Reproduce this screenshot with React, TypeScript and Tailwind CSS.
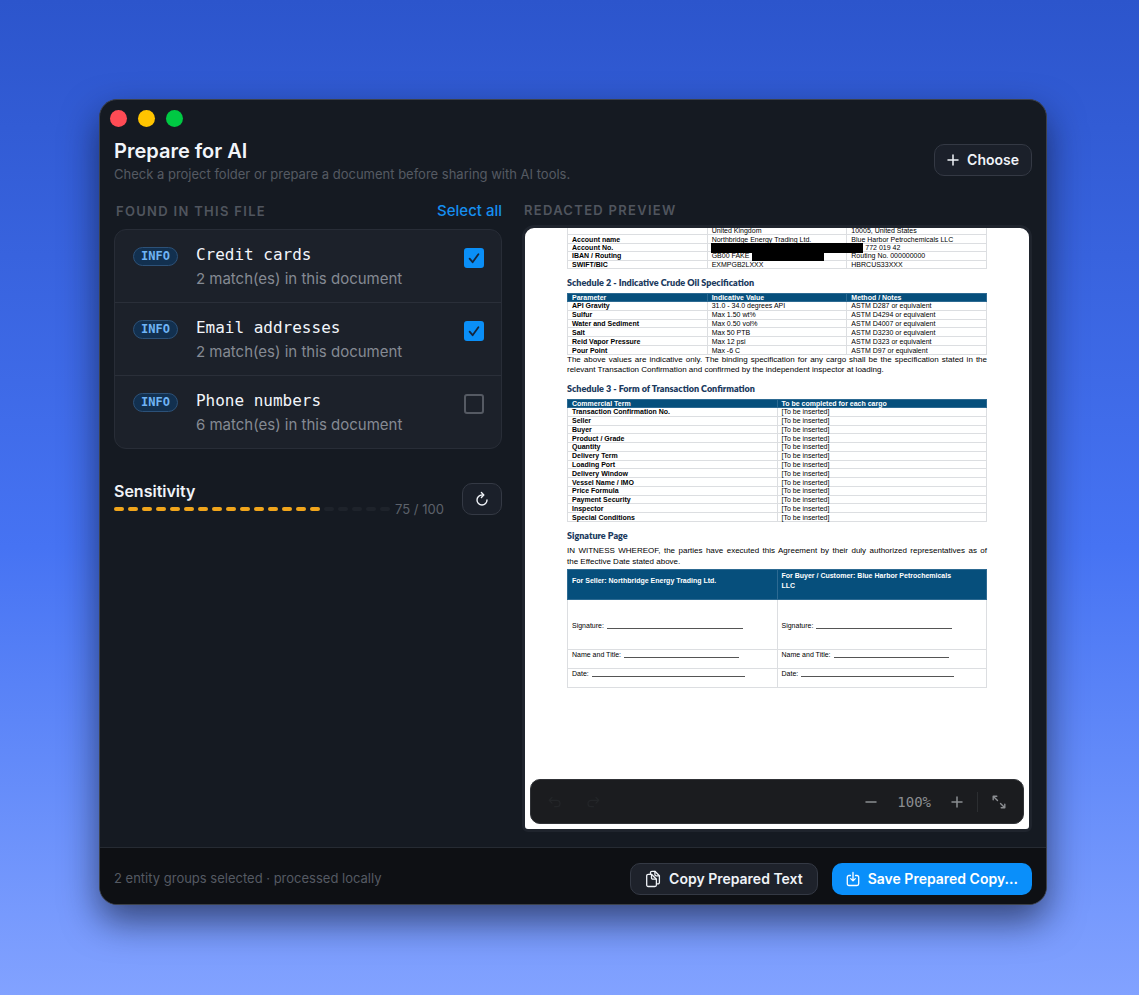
import React, { useState } from "react";
import clsx from "clsx";

interface Finding {
  id: string;
  label: string;
  matches: number;
}

const findings: Finding[] = [
  { id: "cards", label: "Credit cards", matches: 2 },
  { id: "emails", label: "Email addresses", matches: 2 },
  { id: "phones", label: "Phone numbers", matches: 6 },
];

const crudeSpec = [
  ["API Gravity", "31.0 - 34.0 degrees API", "ASTM D287 or equivalent"],
  ["Sulfur", "Max 1.50 wt%", "ASTM D4294 or equivalent"],
  ["Water and Sediment", "Max 0.50 vol%", "ASTM D4007 or equivalent"],
  ["Salt", "Max 50 PTB", "ASTM D3230 or equivalent"],
  ["Reid Vapor Pressure", "Max 12 psi", "ASTM D323 or equivalent"],
  ["Pour Point", "Max -6 C", "ASTM D97 or equivalent"],
];

const commercialTerms = [
  "Transaction Confirmation No.",
  "Seller",
  "Buyer",
  "Product / Grade",
  "Quantity",
  "Delivery Term",
  "Loading Port",
  "Delivery Window",
  "Vessel Name / IMO",
  "Price Formula",
  "Payment Security",
  "Inspector",
  "Special Conditions",
];

const icon = {
  fill: "none",
  stroke: "currentColor",
  strokeLinecap: "round",
  strokeLinejoin: "round",
} as const;

const PlusIcon = ({ className }: { className?: string }) => (
  <svg viewBox="0 0 12 12" strokeWidth="1.5" className={className} {...icon}>
    <path d="M6 1v10M1 6h10" />
  </svg>
);

const MinusIcon = ({ className }: { className?: string }) => (
  <svg viewBox="0 0 12 12" strokeWidth="1.5" className={className} {...icon}>
    <path d="M1 6h10" />
  </svg>
);

const RefreshIcon = () => (
  <svg viewBox="0 0 16 16" strokeWidth="1.4" className="size-4" {...icon}>
    <path d="M9.400 4H8a5 5 0 1 0 5 5" />
    <path d="M7.400 1.600L9.800 4 7.400 6.400" />
  </svg>
);

const CopyIcon = () => (
  <svg viewBox="0 0 16 18" strokeWidth="1.3" className="h-[18px] w-4" {...icon}>
    <path d="M5.400 3.400V2.800a1.500 1.500 0 0 1 1.500-1.500h3L14.400 5.800v6.600a1.500 1.500 0 0 1-1.500 1.500h-1" />
    <path d="M9.900 1.500v3a1.300 1.300 0 0 0 1.300 1.300h3" />
    <path d="M3.200 4.300h3.300l4.900 4.900v5.800a1.500 1.500 0 0 1-1.500 1.500H3.200a1.500 1.500 0 0 1-1.500-1.500V5.800a1.500 1.500 0 0 1 1.500-1.500z" />
    <path d="M6.500 4.500v3.400a1.300 1.300 0 0 0 1.300 1.300h3.400" />
  </svg>
);

const SaveIcon = () => (
  <svg viewBox="0 0 14 16" strokeWidth="1.3" className="h-4 w-3.5" {...icon}>
    <path d="M4.500 4.500H3a1.700 1.700 0 0 0-1.700 1.700v6.600A1.700 1.700 0 0 0 3 14.500h8a1.700 1.700 0 0 0 1.700-1.700V6.200A1.700 1.700 0 0 0 11 4.500H9.500" />
    <path d="M7 1.500v8.200M4.700 7.600L7 9.900l2.300-2.300" />
  </svg>
);

const ExpandIcon = () => (
  <svg viewBox="0 0 14 14" strokeWidth="1.4" className="size-3.5" {...icon}>
    <path d="M5.500 5.500L1.200 1.200M1.200 4.800V1.200h3.600" />
    <path d="M8.500 8.500l4.300 4.300M12.800 9.200v3.600H9.200" />
  </svg>
);

const UndoIcon = () => (
  <svg viewBox="0 0 14 12" strokeWidth="1.3" className="h-3 w-3.5" {...icon}>
    <path d="M4 1.500L1.200 4.300 4 7.100M1.200 4.300h7.600a3.200 3.200 0 0 1 0 6.400H6.500" />
  </svg>
);

const RedoIcon = () => (
  <svg viewBox="0 0 14 12" strokeWidth="1.3" className="h-3 w-3.5" {...icon}>
    <path d="M10 1.500l2.800 2.800L10 7.100M12.800 4.300H5.200a3.200 3.200 0 0 0 0 6.400h2.300" />
  </svg>
);

interface FindingRowProps {
  finding: Finding;
  checked: boolean;
  onToggle: () => void;
}

const FindingRow: React.FC<FindingRowProps> = ({ finding, checked, onToggle }) => (
  <li className="flex items-start border-t border-[#2a2f39] px-[17px] pt-[13px] pb-[11px] first:border-t-0">
    <span className="mt-1 ml-px rounded-full border border-[#2c5178] bg-[#12304f] px-[7px] font-['DejaVu_Sans_Mono',monospace] text-[12px] leading-[17px] font-bold text-[#6fb4f5]">
      INFO
    </span>
    <label htmlFor={finding.id} className="ml-[18px] flex-1">
      <span className="block font-['DejaVu_Sans_Mono',monospace] text-base leading-6 text-[#f2f5fa]">
        {finding.label}
      </span>
      <span className="block text-[15px] leading-6 text-[#858a93]">
        {finding.matches} match(es) in this document
      </span>
    </label>
    <span className="relative mt-[5px] size-5">
      <input
        id={finding.id}
        type="checkbox"
        checked={checked}
        onChange={onToggle}
        className="block size-5 appearance-none rounded-[3px] border-2 border-[#555a63] checked:border-[#0a8ff7] checked:bg-[#0a8ff7]"
      />
      {checked && (
        <svg
          viewBox="0 0 20 20"
          strokeWidth="1.8"
          className="pointer-events-none absolute inset-0 text-[#14263d]"
          {...icon}
        >
          <path d="M5.600 10.600l3 3.600 5.800-8" />
        </svg>
      )}
    </span>
  </li>
);

const SensitivityMeter = ({ value }: { value: number }) => (
  <div className="flex items-center gap-[5px]">
    <div className="flex gap-1">
      {Array.from({ length: 20 }, (_, i) => (
        <span
          key={i}
          className={clsx(
            "h-1 w-2.5 rounded-full",
            i < value / 5 ? "bg-[#f0a51c]" : "bg-[#1e232b]"
          )}
        />
      ))}
    </div>
    <span className="text-[13px] leading-4 text-[#5d626b]">{value} / 100</span>
  </div>
);

const cell = "border border-[#dcdee1] px-1 py-0 text-left";
const headCell = "border border-[#2d6a92] px-1 py-0 text-left font-bold";
const docHeading =
  "font-[Lato,sans-serif] text-[9px] leading-3 font-extrabold text-[#1b3a5e]";

const SignatureField = ({ label, width }: { label: string; width: string }) => (
  <span className="flex items-end gap-[3px]">
    {label}
    <span className={clsx("h-2 border-b border-[#555]", width)} />
  </span>
);

const DocumentPage = () => (
  <article className="-mt-0.5 px-[42px] font-['Liberation_Sans',Arial,sans-serif] text-[7px] leading-[7px] text-black">
    <table className="h-[43px] w-full table-fixed border-collapse">
      <tbody>
        <tr>
          <th className={cell}></th>
          <td className={cell}>United Kingdom</td>
          <td className={cell}>10005, United States</td>
        </tr>
        <tr>
          <th className={cell}>Account name</th>
          <td className={cell}>Northbridge Energy Trading Ltd.</td>
          <td className={cell}>Blue Harbor Petrochemicals LLC</td>
        </tr>
        <tr>
          <th className={cell}>Account No.</th>
          <td className={clsx(cell, "relative")}>
            <span className="absolute -top-px left-[3px] h-[10px] w-[152px] bg-black" />
          </td>
          <td className="border border-[#dcdee1] py-0 pl-[18px]">772 019 42</td>
        </tr>
        <tr>
          <th className={cell}>IBAN / Routing</th>
          <td className={clsx(cell, "relative")}>
            GB00 FAKE
            <span className="absolute -top-px left-11 h-[10px] w-[72px] bg-black" />
          </td>
          <td className={cell}>Routing No. 000000000</td>
        </tr>
        <tr>
          <th className={cell}>SWIFT/BIC</th>
          <td className={cell}>EXMPGB2LXXX</td>
          <td className={cell}>HBRCUS33XXX</td>
        </tr>
      </tbody>
    </table>

    <h3 className={clsx(docHeading, "mt-2 mb-1")}>
      Schedule 2 - Indicative Crude Oil Specification
    </h3>
    <table className="h-[62px] w-full table-fixed border-collapse">
      <thead className="bg-[#064f7c] text-white">
        <tr>
          <th className={headCell}>Parameter</th>
          <th className={headCell}>Indicative Value</th>
          <th className={headCell}>Method / Notes</th>
        </tr>
      </thead>
      <tbody>
        {crudeSpec.map(([name, value, method]) => (
          <tr key={name}>
            <th className={cell}>{name}</th>
            <td className={cell}>{value}</td>
            <td className={cell}>{method}</td>
          </tr>
        ))}
      </tbody>
    </table>
    <p className="text-justify text-[8px] leading-[10px]">
      The above values are indicative only. The binding specification for any
      cargo shall be the specification stated in the relevant Transaction
      Confirmation and confirmed by the independent inspector at loading.
    </p>

    <h3 className={clsx(docHeading, "mt-2 mb-1")}>
      Schedule 3 - Form of Transaction Confirmation
    </h3>
    <table className="h-[123px] w-full table-fixed border-collapse">
      <thead className="bg-[#064f7c] text-white">
        <tr>
          <th className={headCell}>Commercial Term</th>
          <th className={headCell}>To be completed for each cargo</th>
        </tr>
      </thead>
      <tbody>
        {commercialTerms.map((term) => (
          <tr key={term}>
            <th className={cell}>{term}</th>
            <td className={cell}>[To be inserted]</td>
          </tr>
        ))}
      </tbody>
    </table>

    <h3 className={clsx(docHeading, "mt-2 mb-[3px]")}>Signature Page</h3>
    <p className="mb-0.5 text-justify text-[8px] leading-[11px]">
      IN WITNESS WHEREOF, the parties have executed this Agreement by their duly
      authorized representatives as of the&nbsp;Effective Date stated above.
    </p>
    <table className="w-full table-fixed border-collapse">
      <thead className="bg-[#064f7c] leading-[10px] text-white">
        <tr className="h-[30px]">
          <th className={clsx(headCell, "pb-2")}>
            For Seller: Northbridge Energy Trading Ltd.
          </th>
          <th className={clsx(headCell, "pr-7 pb-2")}>
            For Buyer / Customer: Blue Harbor Petrochemicals LLC
          </th>
        </tr>
      </thead>
      <tbody>
        <tr className="h-[50px]">
          {[0, 1].map((i) => (
            <td key={i} className={cell}>
              <SignatureField label="Signature:" width="w-[136px]" />
            </td>
          ))}
        </tr>
        <tr className="h-[19px] align-top">
          {[0, 1].map((i) => (
            <td key={i} className={cell}>
              <SignatureField label="Name and Title:" width="w-[115px]" />
            </td>
          ))}
        </tr>
        <tr className="h-[19px] align-top">
          {[0, 1].map((i) => (
            <td key={i} className={cell}>
              <SignatureField label="Date:" width="w-[153px]" />
            </td>
          ))}
        </tr>
      </tbody>
    </table>
  </article>
);

const PreviewToolbar = () => (
  <div className="absolute inset-x-[5px] bottom-[5px] flex h-[45px] items-center rounded-[10px] border border-[#303236] bg-[#1b1c1f] px-[17px] text-[#8b8d91]">
    <button type="button" aria-label="Undo" disabled className="text-[#232528]">
      <UndoIcon />
    </button>
    <button type="button" aria-label="Redo" disabled className="ml-6 text-[#232528]">
      <RedoIcon />
    </button>
    <button type="button" aria-label="Zoom out" className="ml-auto">
      <MinusIcon className="size-3" />
    </button>
    <span className="mx-5 font-['DejaVu_Sans_Mono',monospace] text-sm leading-5">
      100%
    </span>
    <button type="button" aria-label="Zoom in">
      <PlusIcon className="size-3" />
    </button>
    <span className="mx-3.5 h-5 w-px bg-[#2c2e31]" />
    <button type="button" aria-label="Fit to window">
      <ExpandIcon />
    </button>
  </div>
);

export default function App() {
  const [selected, setSelected] = useState<string[]>(["cards", "emails"]);

  const toggle = (id: string) =>
    setSelected((prev) =>
      prev.includes(id) ? prev.filter((x) => x !== id) : [...prev, id]
    );

  return (
    <div className="flex min-h-screen bg-linear-to-b from-[#2c55cc] via-[#4673f3] via-55% to-[#82a2ff] pt-[99px] pr-[92px] pb-[90px] pl-[99px] font-[Inter,sans-serif]">
      <main className="flex flex-1 flex-col overflow-hidden rounded-[18px] border border-[#3c414b] bg-[#151a22] shadow-[0_16px_36px_rgba(10,15,35,0.6)]">
        <div className="flex gap-[11px] px-2.5 pt-2.5">
          <span className="size-[17px] rounded-full bg-[#ff4b55]" />
          <span className="size-[17px] rounded-full bg-[#ffc400]" />
          <span className="size-[17px] rounded-full bg-[#00c943]" />
        </div>

        <header className="flex items-center justify-between px-3.5 pt-2.5">
          <div>
            <h1 className="text-xl leading-7 font-semibold text-[#f2f5fa]">
              Prepare for AI
            </h1>
            <p className="text-[13px] leading-[18px] text-[#555a63]">
              Check a project folder or prepare a document before sharing with AI
              tools.
            </p>
          </div>
          <button
            type="button"
            className="flex h-8 items-center gap-2 rounded-[10px] border border-[#343944] bg-[#1b202a] px-3 text-sm font-semibold text-[#f0f3f8]"
          >
            <PlusIcon className="size-3" />
            Choose
          </button>
        </header>

        <div className="grid flex-1 grid-cols-[388fr_510fr] gap-5 px-3.5 pt-4 pb-[15px]">
          <section>
            <div className="flex items-center justify-between pl-0.5">
              <h2 className="text-[13px] leading-6 font-semibold tracking-widest text-[#50555e]">
                FOUND IN THIS FILE
              </h2>
              <button
                type="button"
                onClick={() => setSelected(findings.map((f) => f.id))}
                className="text-[15px] leading-6 font-medium text-[#168ff0]"
              >
                Select all
              </button>
            </div>
            <ul className="mt-1.5 rounded-xl border border-[#282d37] bg-[#1c212a]">
              {findings.map((f) => (
                <FindingRow
                  key={f.id}
                  finding={f}
                  checked={selected.includes(f.id)}
                  onToggle={() => toggle(f.id)}
                />
              ))}
            </ul>

            <div className="mt-8 flex items-center justify-between">
              <div>
                <h2 className="text-base leading-5 font-semibold text-[#f0f3f8]">
                  Sensitivity
                </h2>
                <SensitivityMeter value={75} />
              </div>
              <button
                type="button"
                aria-label="Scan again"
                className="flex h-8 w-10 items-center justify-center rounded-[10px] border border-[#343944] bg-[#1b202a] text-[#f0f3f8]"
              >
                <RefreshIcon />
              </button>
            </div>
          </section>

          <section className="flex flex-col">
            <h2 className="pl-0.5 text-[13px] leading-[22px] font-semibold tracking-widest text-[#50555e]">
              REDACTED PREVIEW
            </h2>
            <div className="relative mt-1 flex-1 overflow-hidden rounded-t-xl rounded-b-md border-3 border-[#1f242d] bg-white">
              <DocumentPage />
              <PreviewToolbar />
            </div>
          </section>
        </div>

        <footer className="flex items-center gap-3.5 border-t border-[#262b33] bg-[#0e1014] px-3.5 pt-[15px] pb-[9px]">
          <p className="flex-1 text-[13px] text-[#555a63]">
            {selected.length} entity groups selected · processed locally
          </p>
          <button
            type="button"
            className="flex h-8 items-center gap-2 rounded-[10px] border border-[#343944] bg-[#1e222b] px-3.5 text-sm font-semibold text-[#f0f3f8]"
          >
            <CopyIcon />
            Copy Prepared Text
          </button>
          <button
            type="button"
            className="flex h-8 items-center gap-2 rounded-[10px] bg-[#0a8ffa] px-3.5 text-sm font-semibold text-white"
          >
            <SaveIcon />
            Save Prepared Copy...
          </button>
        </footer>
      </main>
    </div>
  );
}
